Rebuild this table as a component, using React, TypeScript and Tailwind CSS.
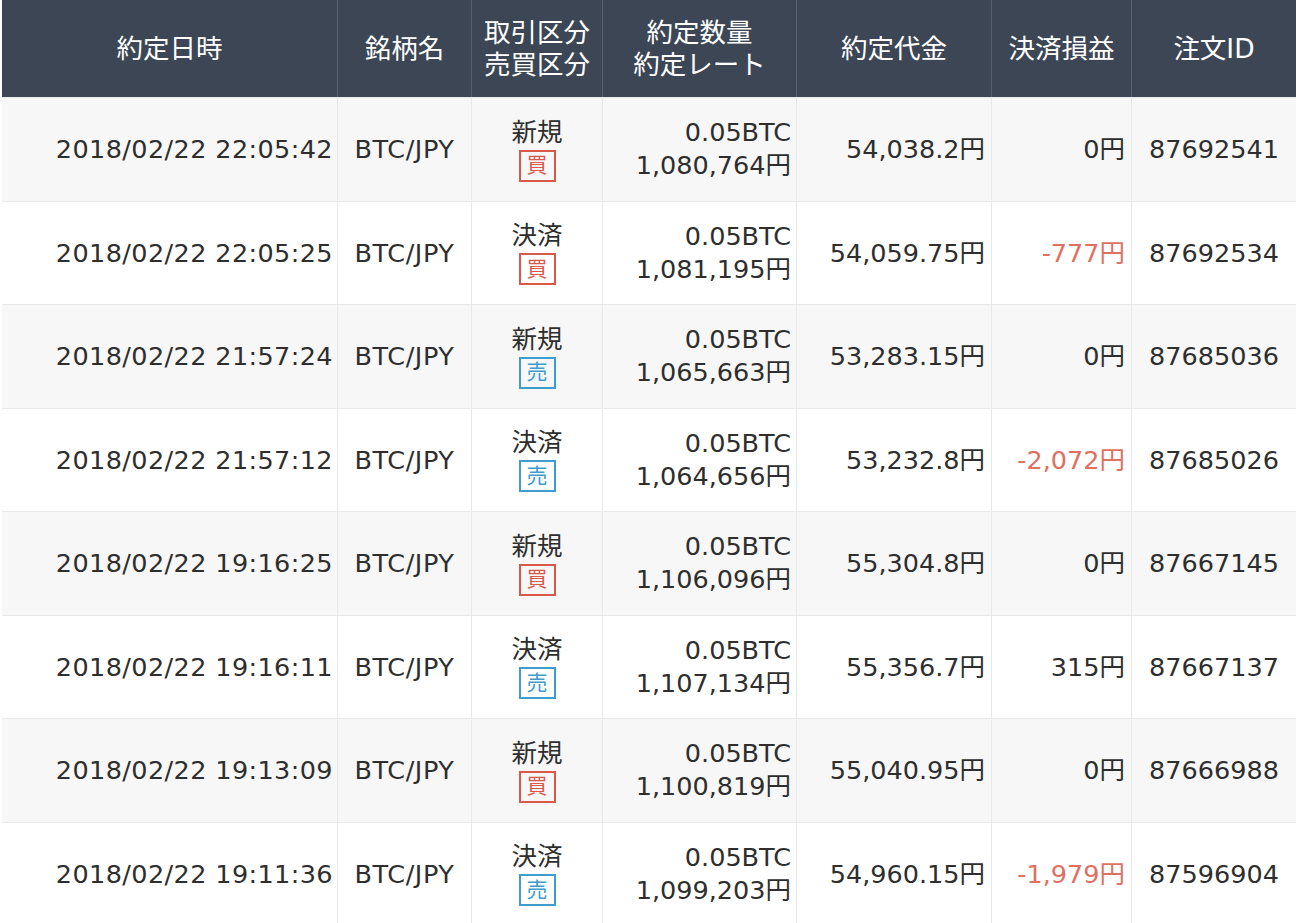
type Trade = {
  time: string;
  kind: "新規" | "決済";
  side: "買" | "売";
  rate: string;
  amount: string;
  pl: string;
  id: string;
};

const trades: Trade[] = [
  { time: "2018/02/22 22:05:42", kind: "新規", side: "買", rate: "1,080,764円", amount: "54,038.2円", pl: "0円", id: "87692541" },
  { time: "2018/02/22 22:05:25", kind: "決済", side: "買", rate: "1,081,195円", amount: "54,059.75円", pl: "-777円", id: "87692534" },
  { time: "2018/02/22 21:57:24", kind: "新規", side: "売", rate: "1,065,663円", amount: "53,283.15円", pl: "0円", id: "87685036" },
  { time: "2018/02/22 21:57:12", kind: "決済", side: "売", rate: "1,064,656円", amount: "53,232.8円", pl: "-2,072円", id: "87685026" },
  { time: "2018/02/22 19:16:25", kind: "新規", side: "買", rate: "1,106,096円", amount: "55,304.8円", pl: "0円", id: "87667145" },
  { time: "2018/02/22 19:16:11", kind: "決済", side: "売", rate: "1,107,134円", amount: "55,356.7円", pl: "315円", id: "87667137" },
  { time: "2018/02/22 19:13:09", kind: "新規", side: "買", rate: "1,100,819円", amount: "55,040.95円", pl: "0円", id: "87666988" },
  { time: "2018/02/22 19:11:36", kind: "決済", side: "売", rate: "1,099,203円", amount: "54,960.15円", pl: "-1,979円", id: "87596904" },
];

const cols = "grid grid-cols-[336px_134px_131px_194px_195px_140px_164px]";

function Side({ side }: { side: Trade["side"] }) {
  const tone = side === "買" ? "border-[#d9584a] text-[#d9584a]" : "border-[#3f9ccf] text-[#3f9ccf]";
  return (
    <span className={`mt-[3px] flex h-[32px] w-[37px] items-center justify-center border-2 text-[21px] leading-none ${tone}`}>
      {side}
    </span>
  );
}

export default function App() {
  return (
    <div className="h-[923px] overflow-hidden bg-white pl-[2px] text-[25.5px] text-[#2e2e2e] [font-family:'DejaVu_Sans','Noto_Sans_CJK_JP',sans-serif]">
      <div className="w-[1294px]">
        <div className={`${cols} h-[97px] bg-[#3c4655] text-[26.5px] text-white leading-[32px]`}>
          <div className="flex items-center justify-center border-r border-[#566170]">約定日時</div>
          <div className="flex items-center justify-center border-r border-[#566170]">銘柄名</div>
          <div className="flex flex-col items-center justify-center border-r border-[#566170]">
            <span>取引区分</span>
            <span>売買区分</span>
          </div>
          <div className="flex flex-col items-center justify-center border-r border-[#566170]">
            <span>約定数量</span>
            <span>約定レート</span>
          </div>
          <div className="flex items-center justify-center border-r border-[#566170]">約定代金</div>
          <div className="flex items-center justify-center border-r border-[#566170]">決済損益</div>
          <div className="flex items-center justify-center">注文ID</div>
        </div>
        {trades.map((t, i) => (
          <div
            key={t.id}
            className={`${cols} h-[103.5px] border-t border-[#e9e9e9] ${i % 2 === 0 ? "bg-[#f7f7f7]" : "bg-white"}`}
          >
            <div className="flex items-center justify-end border-r border-[#e9e9e9] pr-[4px] tracking-[0.4px]">{t.time}</div>
            <div className="flex items-center justify-center border-r border-[#e9e9e9] tracking-[0.6px]">BTC/JPY</div>
            <div className="flex flex-col items-center justify-center border-r border-[#e9e9e9] leading-[30px]">
              <span>{t.kind}</span>
              <Side side={t.side} />
            </div>
            <div className="flex flex-col items-end justify-center border-r border-[#e9e9e9] pr-[5px] leading-[33px]">
              <span>0.05BTC</span>
              <span>{t.rate}</span>
            </div>
            <div className="flex items-center justify-end border-r border-[#e9e9e9] pr-[6px]">{t.amount}</div>
            <div
              className={`flex items-center justify-end border-r border-[#e9e9e9] pr-[6px] ${t.pl.startsWith("-") ? "text-[#e0705f]" : ""}`}
            >
              {t.pl}
            </div>
            <div className="flex items-center justify-center">{t.id}</div>
          </div>
        ))}
      </div>
    </div>
  );
}
